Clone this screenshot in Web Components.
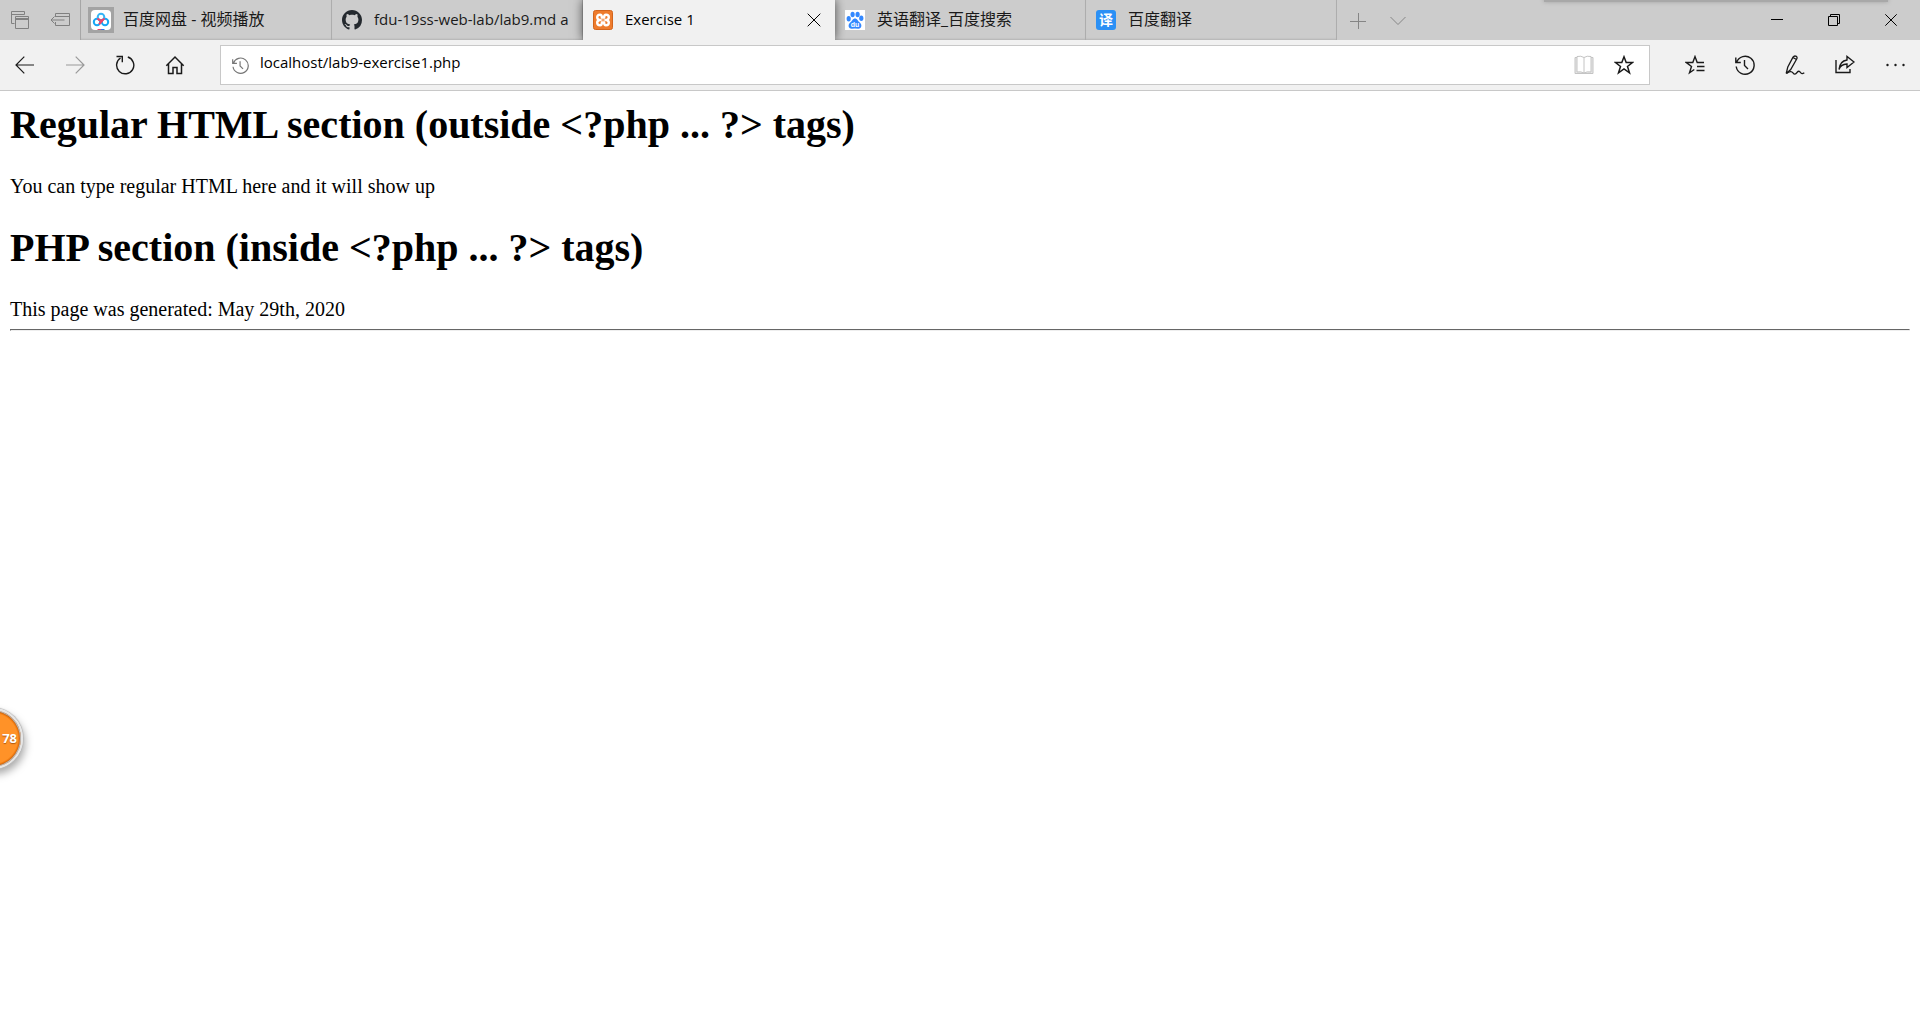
<!DOCTYPE html>
<html lang="zh-CN">
<head>
<meta charset="utf-8">
<title>Exercise 1</title>
<style>
html, body { height: 100%; margin: 0; }
body { background: #fff; color: #000; font-family: "Liberation Serif", serif; font-size: 20px; overflow: hidden; }
h1 { font-size: 40px; line-height: 46px; margin: 0 0 27px; }
p { line-height: 23px; margin: 0 0 27px; }
.stamp { line-height: 23px; }
hr { margin: 8px 0; border: 1px solid #eee; border-top-color: #666; border-left-color: #666; }
</style>
</head>
<body>
<browser-window>
  <tab-strip slot="tabs">
    <browser-tab icon="pan" lang="zh">百度网盘 - 视频播放</browser-tab>
    <browser-tab icon="github" lang="en">fdu-19ss-web-lab/lab9.md a</browser-tab>
    <browser-tab icon="xampp" lang="en" active>Exercise 1</browser-tab>
    <browser-tab icon="baidu" lang="zh">英语翻译_百度搜索</browser-tab>
    <browser-tab icon="fanyi" lang="zh">百度翻译</browser-tab>
  </tab-strip>
  <nav-bar slot="nav" url="localhost/lab9-exercise1.php"></nav-bar>
  <h1>Regular HTML section (outside &lt;?php ... ?&gt; tags)</h1>
  <p>You can type regular HTML here and it will show up</p>
  <h1>PHP section (inside &lt;?php ... ?&gt; tags)</h1>
  <div class="stamp">This page was generated: May 29th, 2020</div>
  <hr>
</browser-window>
<float-ball>78</float-ball>

<script>
const UI = '"Open Sans", "Noto Sans CJK SC", sans-serif';

// name: [width, height, markup]
const ICONS = {
  tabs: [20, 20, '<path d="M4.5 13.500H1.500V1.500H14.500V4.500M1.500 4.500H14.500M5.500 6.500H18.500V18.500H5.500ZM5.500 9.500H18.500M5.500 8.500H18.500"/>'],
  aside: [20, 14, '<path d="M5.500 4V.500H19.500V12.500H5.500V9M5.500 3.500H19.500M14.500 7H1M4.500 3.500L1 7L4.500 10.500"/>'],
  plus: [16, 16, '<path d="M0 8.500H16M8.500 0V16"/>'],
  chevron: [16, 10, '<path d="M.5 1L8 8.500L15.500 1"/>'],
  close: [14, 14, '<path d="M.7.7L13.300 13.300M13.300.7L.7 13.300"/>'],
  min: [12, 12, '<path d="M0 5.500H12"/>'],
  restore: [12, 12, '<path d="M.5 2.500H9.500V11.500H.5ZM2.500 2.500V.500H11.500V9.500H9.500"/>'],
  winclose: [12, 12, '<path d="M.3.3L11.700 11.700M11.700.3L.3 11.700"/>'],
  back: [20, 18, '<path d="M19 9H1M9.300.7L1 9L9.300 17.300" stroke-width="1.200"/>'],
  forward: [20, 18, '<path d="M1 9H19M10.700.7L19 9L10.700 17.300" stroke-width="1.200"/>'],
  reload: [20, 20, '<path d="M12.800 2A8.600 8.600 0 1 1 5.500 3M1.500 1.500H7.300V7.300" stroke-width="1.400"/>'],
  home: [20, 20, '<path d="M1.300 10.700L10 2L18.700 10.700M3.500 8.800V18.500H8V12.500H12V18.500H16.500V8.800" stroke-width="1.500"/>'],
  history: [20, 20, '<path d="M1.600 7.300A9 9 0 1 1 1.200 11.500M.8 2.500V7.500H5.800M9.500 5V10.500L13 14" stroke-width="1.400"/>'],
  book: [20, 20, '<path d="M3 2.500H1V18.500H19V2.500H17" fill="#e6e6e6"/><path d="M3 1.500Q7 .5 10 2.500Q13 .5 17 1.500V17Q13 16.200 10 18Q7 16.200 3 17ZM10 2.500V18" fill="#fff"/>'],
  star: [20, 20, '<path d="M10 1.800L12.200 7.500H18.500L13.500 11.400L15.500 17.800L10 14L4.500 17.800L6.500 11.400L1.500 7.500H7.800Z" stroke-width="1.500" stroke-linejoin="miter"/>'],
  hub: [20, 20, '<path d="M19 7.500H12.200L10 1.600L7.800 7.500H1.300L6.500 11.400L4.500 17.800L9.300 14.500M12 11.500H19.500M11.500 15.500H19.500" stroke-width="1.400"/>'],
  pen: [20, 20, '<path d="M1.200 18.500L2.800 12L8 2.200Q9.300.3 11.300 1.300Q12.600 2.500 11.700 4L5.700 14.600L1.200 18.500M8 2.500L11.500 4.500" stroke-width="1.300"/><path d="M1.500 18.500Q6 15 8 17.800Q9.800 20.400 12 17.500Q14 15 15.500 17.500Q16.700 19.500 19.300 17.800" stroke-width="1.300"/>'],
  share: [20, 20, '<path d="M1 5V17.500H15V14M4 14.500Q5.300 9.300 12 9V12.500L19 7L12 1.500V5Q4.800 6 4 14.500Z" stroke-width="1.400"/>'],
  more: [20, 20, '<g fill="currentColor" stroke="none"><circle cx="2.500" cy="10" r="1.200"/><circle cx="10.500" cy="10" r="1.200"/><circle cx="18.500" cy="10" r="1.200"/></g>'],
  pan: [20, 20, '<g stroke-width="0"><rect width="20" height="20" rx="4" fill="#fff"/></g><g stroke-width="2"><circle cx="6" cy="12" r="3.200" stroke="#18a8f5"/><circle cx="14" cy="12" r="3.200" stroke="#18a8f5"/><circle cx="10" cy="7" r="3.300" stroke="#35b5f6"/><path d="M6.800 8.200Q7.500 10.500 10 10.300Q12.500 10.500 13.200 8.200M8 14.200L11.500 10.500" stroke="#f2436a"/></g><path d="M6.500 19.500H10" stroke="#f2436a"/><path d="M10 19.500H13.500" stroke="#2c7be5"/>'],
  github: [20, 20, '<path transform="scale(1.250)" fill="#24292e" stroke="none" d="M8 0C3.580 0 0 3.580 0 8c0 3.540 2.290 6.530 5.470 7.590.4.070.550-.170.550-.380 0-.190-.010-.820-.010-1.490-2.010.370-2.530-.490-2.690-.940-.090-.230-.480-.940-.820-1.130-.280-.150-.680-.520-.010-.530.630-.010 1.080.580 1.230.820.720 1.210 1.870.870 2.330.660.070-.520.280-.870.510-1.070-1.780-.200-3.640-.890-3.640-3.950 0-.870.310-1.590.820-2.150-.080-.200-.360-1.020.080-2.120 0 0 .670-.210 2.200.820.640-.180 1.320-.270 2-.270s1.360.090 2 .270c1.530-1.040 2.200-.820 2.200-.820.440 1.100.160 1.920.080 2.120.510.560.820 1.270.820 2.150 0 3.070-1.870 3.750-3.650 3.950.290.250.540.730.540 1.480 0 1.070-.010 1.930-.010 2.200 0 .210.150.460.550.380A8.010 8.010 0 0 0 16 8c0-4.420-3.580-8-8-8z"/>'],
  xampp: [20, 20, '<rect x=".5" y=".5" width="19" height="19" rx="2" fill="#ee7b2c" stroke="#d2641c"/><path stroke="#fff" stroke-width="2.400" d="M7 4.800Q8.900 4.800 8.900 7.500H11.100Q11.100 4.800 13 4.800Q15.800 4.800 15.800 7.200Q15.800 9.300 13.600 10Q15.800 10.700 15.800 12.800Q15.800 15.200 13 15.200Q11.100 15.200 11.100 12.500H8.900Q8.900 15.200 7 15.200Q4.200 15.200 4.200 12.800Q4.200 10.700 6.400 10Q4.200 9.300 4.200 7.200Q4.200 4.800 7 4.800Z"/>'],
  baidu: [20, 20, '<rect width="20" height="20" fill="#fff" stroke="none"/><g fill="#3388ff" stroke="none"><ellipse cx="3.700" cy="8.800" rx="2.100" ry="2.700"/><ellipse cx="7.600" cy="4.500" rx="2.100" ry="2.800"/><ellipse cx="12.600" cy="4.500" rx="2.100" ry="2.800"/><ellipse cx="16.300" cy="8.300" rx="2.100" ry="2.700"/><path d="M10 8.500C12.300 8.500 12.800 11 14.500 12.300C17.500 14.500 16.800 18.800 13.300 18.800Q10 18 6.700 18.800C3.200 18.800 2.500 14.500 5.500 12.300C7.200 11 7.700 8.500 10 8.500Z"/></g><text x="10" y="17" text-anchor="middle" font-family="Liberation Sans" font-weight="bold" font-size="7" fill="#fff" stroke="none">du</text>'],
  fanyi: [20, 20, '<rect width="20" height="20" rx="3" fill="#2b90f5" stroke="none"/><text x="10" y="15" text-anchor="middle" font-family="Noto Sans CJK SC" font-weight="bold" font-size="14" fill="#fff" stroke="none">译</text>']
};

function svg(name) {
  const [w, h, body] = ICONS[name];
  return `<svg aria-hidden="true" width="${w}" height="${h}" viewBox="0 0 ${w} ${h}" fill="none" stroke="currentColor">${body}</svg>`;
}

const BUTTON = `
  button { display: flex; align-items: center; justify-content: center; flex: none;
    border: 0; padding: 0; margin: 0; background: none; color: inherit; height: 100%; }
  svg { display: block; flex: none; }`;

class BrowserWindow extends HTMLElement {
  constructor() {
    super();
    this.attachShadow({ mode: 'open' }).innerHTML = `
      <style>
        :host { display: flex; flex-direction: column; height: 100%; }
        main { flex: 1; padding: 11px 10px 10px; overflow: auto; background: #fff; }
      </style>
      <header><slot name="tabs"></slot><slot name="nav"></slot></header>
      <main><slot></slot></main>`;
  }
}

class TabStrip extends HTMLElement {
  constructor() {
    super();
    this.attachShadow({ mode: 'open' }).innerHTML = `
      <style>
        :host { display: flex; height: 40px; background: #ccc; color: #000; position: relative; overflow: hidden;
          font-family: ${UI}; }
        ${BUTTON}
        .tools, .new, .win { display: flex; flex: none; }
        .tools { border-right: 1px solid #a6a6a6; color: #808080; }
        .tools button, .new button { width: 40px; }
        .new { color: #858585; padding: 1px 0 0 1px; }
        .win { margin-left: auto; padding-right: 1px; }
        .win button { width: 57px; }
        .cast { position: absolute; top: -8px; right: 32px; width: 344px; height: 10px; background: #a8a8a8;
          box-shadow: 0 0 4px #a0a0a0; }
      </style>
      <div class="tools">
        <button aria-label="Tabs set aside">${svg('tabs')}</button>
        <button aria-label="Set tabs aside">${svg('aside')}</button>
      </div>
      <slot></slot>
      <div class="new">
        <button aria-label="New tab">${svg('plus')}</button>
        <button aria-label="Tab previews">${svg('chevron')}</button>
      </div>
      <div class="win">
        <button aria-label="Minimize">${svg('min')}</button>
        <button aria-label="Restore">${svg('restore')}</button>
        <button aria-label="Close">${svg('winclose')}</button>
      </div>
      <div class="cast"></div>`;
  }
}

class BrowserTab extends HTMLElement {
  connectedCallback() {
    const active = this.hasAttribute('active');
    this.attachShadow({ mode: 'open' }).innerHTML = `
      <style>
        :host { display: flex; align-items: center; flex: 0 1 251px; min-width: 0; box-sizing: border-box;
          padding: 0 11px 0 10px; gap: 12px; border-right: 1px solid #adadad; font-size: 15px; line-height: 24px;
          color: #1a1a1a; box-shadow: inset 0 -2px 2px -1px rgba(0,0,0,.12); }
        :host(:lang(zh)) { font-size: 16px; }
        :host([active]) { flex-basis: 252px; background: #f1f1f1; border-color: #f1f1f1; color: #000; padding-right: 13px;
          box-shadow: 0 0 10px rgba(0,0,0,.65); z-index: 1; position: relative; }
        :host([icon="pan"]) svg { box-shadow: 0 0 0 3px #a3a3a3; background: #a3a3a3; }
        .title { flex: 1; min-width: 0; overflow: hidden; white-space: nowrap; padding-bottom: 2px; }
        ${BUTTON}
      </style>
      ${svg(this.getAttribute('icon'))}
      <span class="title"><slot></slot></span>
      ${active ? `<button aria-label="Close tab">${svg('close')}</button>` : ''}`;
  }
}

class NavBar extends HTMLElement {
  connectedCallback() {
    this.attachShadow({ mode: 'open' }).innerHTML = `
      <style>
        :host { display: flex; align-items: center; height: 50px; background: #f1f1f1; color: #1a1a1a;
          border-bottom: 1px solid #c8c8c8; font-family: ${UI}; }
        ${BUTTON}
        button { width: 50px; }
        button:disabled { color: #999; }
        form { flex: 1; display: flex; align-items: center; height: 40px; box-sizing: border-box; margin: 0 20px;
          background: #fff; border: 1px solid #c8c8c8; padding: 0 5px 0 11px; }
        form button { width: 40px; }
        form button:disabled { color: #c4c4c4; }
        label { color: #777; }
        label svg { width: 17px; height: 17px; }
        input { flex: 1; min-width: 0; height: 100%; box-sizing: border-box; border: 0; outline: 0; background: none;
          padding: 0 0 6px 11px; font: 15px ${UI}; color: #000; }
      </style>
      <button aria-label="Back">${svg('back')}</button>
      <button aria-label="Forward" disabled>${svg('forward')}</button>
      <button aria-label="Refresh">${svg('reload')}</button>
      <button aria-label="Home">${svg('home')}</button>
      <form>
        <label for="url" aria-label="Address">${svg('history')}</label>
        <input id="url" type="text" spellcheck="false" value="${this.getAttribute('url')}">
        <button type="button" aria-label="Reading view" disabled>${svg('book')}</button>
        <button type="button" aria-label="Add to favorites">${svg('star')}</button>
      </form>
      <button aria-label="Favorites">${svg('hub')}</button>
      <button aria-label="History">${svg('history')}</button>
      <button aria-label="Add notes">${svg('pen')}</button>
      <button aria-label="Share">${svg('share')}</button>
      <button aria-label="More">${svg('more')}</button>`;
  }
}

class FloatBall extends HTMLElement {
  constructor() {
    super();
    this.attachShadow({ mode: 'open' }).innerHTML = `
      <style>
        :host { position: absolute; left: -38px; top: 708px; }
        button { display: flex; align-items: center; justify-content: flex-end; width: 61px; height: 61px;
          box-sizing: border-box; padding: 0 4px 2px 0; border: 2px solid #e6e6e6; border-radius: 50%;
          background: radial-gradient(circle, #ff9228 0 25px, #f58014 26px, #b85a10 28px);
          box-shadow: 0 0 0 1px #b8b8b8 inset, 0 0 1px 1px #bbb, 2px 5px 9px rgba(0,0,0,.35);
          color: #fff; font: bold 13px "Open Sans", sans-serif; text-shadow: 0 1px 1px rgba(120,50,0,.6); }
      </style>
      <button><slot></slot></button>`;
  }
}

customElements.define('browser-window', BrowserWindow);
customElements.define('tab-strip', TabStrip);
customElements.define('browser-tab', BrowserTab);
customElements.define('nav-bar', NavBar);
customElements.define('float-ball', FloatBall);
</script>
</body>
</html>
